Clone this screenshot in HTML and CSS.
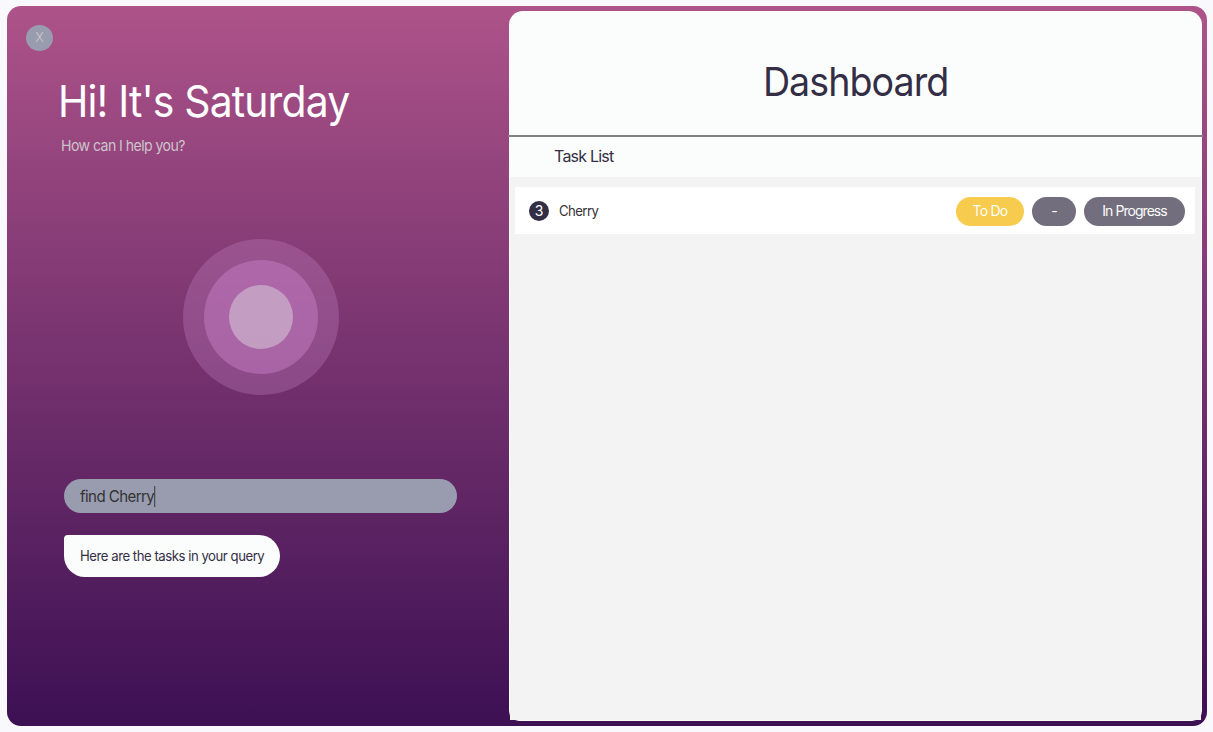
FILE: index.html
```html
<!DOCTYPE html>
<html lang="en">
<head>
<meta charset="utf-8">
<title>Dashboard</title>
<link rel="stylesheet" href="styles.css">
</head>
<body>
<div class="window">
  <section class="assistant">
    <button class="close">X</button>
    <h1 class="greeting">Hi! It's Saturday</h1>
    <p class="prompt">How can I help you?</p>
    <div class="orb"><div class="orb-mid"><div class="orb-core"></div></div></div>
    <div class="query"><span class="query-text">find Cherry<i class="caret"></i></span></div>
    <div class="reply"><span class="reply-text">Here are the tasks in your query</span></div>
  </section>
  <main class="panel">
    <header class="panel-head"><h2 class="panel-title">Dashboard</h2></header>
    <div class="list-head"><span class="list-title">Task List</span></div>
    <div class="list">
      <div class="task">
        <span class="index">3</span>
        <span class="name">Cherry</span>
        <span class="pill todo">To Do</span>
        <span class="pill dash">-</span>
        <span class="pill progress">In Progress</span>
      </div>
    </div>
  </main>
</div>
</body>
</html>
```
FILE: styles.css
```css
* { box-sizing: border-box; }
body {
  margin: 0;
  padding: 6px 6px 6px 7px;
  height: 732px;
  overflow: hidden;
  background: #f8f8fd;
  font-family: Inter, "Liberation Sans", sans-serif;
  color: #332e45;
}
.window {
  display: flex;
  height: 720px;
  padding: 5px 5px 5px 0;
  border-radius: 14px;
  background: linear-gradient(#ad5389, #3c1053);
}
.assistant { display: flex; flex-direction: column; align-items: flex-start; width: 502px; }
.close {
  width: 27px; height: 26px;
  margin: 14px 0 0 19px;
  padding: 0 0 2px;
  border: 0; border-radius: 50%;
  background: #999bae;
  color: #cbcbcb;
  font: 300 13px/24px Inter, sans-serif;
}
/* Slightly condensed lettering */
.greeting, .prompt, .query-text, .reply-text { transform: scaleX(.94); transform-origin: 0 50%; }
.greeting {
  margin: 24px 0 0 51px;
  font-size: 43.5px; line-height: 52px; font-weight: 400;
  letter-spacing: -0.9px;
  color: #fff;
  white-space: nowrap;
}
.prompt {
  margin: 9px 0 0 54px;
  font-size: 15px; line-height: 20px; font-weight: 400;
  letter-spacing: -0.6px;
  color: #cbc4cb;
}
.orb, .orb-mid, .orb-core { display: flex; align-items: center; justify-content: center; border-radius: 50%; }
.orb { width: 156px; height: 156px; margin: 83px 0 0 176px; background: rgba(192, 132, 192, .32); }
.orb-mid { width: 114px; height: 114px; background: rgba(207, 137, 207, .42); }
.orb-core { width: 64px; height: 64px; background: rgba(212, 194, 212, .6); }
.query {
  display: flex; align-items: center;
  width: 393px; height: 34px;
  margin: 84px 0 0 57px;
  padding-left: 16px;
  border-radius: 17px;
  background: #999bae;
  font-size: 16px; font-weight: 400;
  letter-spacing: -0.6px;
  color: #333;
}
.query-text { display: flex; align-items: center; }
.caret { width: 1px; height: 21px; background: #333; }
.reply {
  display: flex; align-items: center;
  width: 216px; height: 42px;
  margin: 22px 0 0 57px;
  padding: 0 0 1px 16px;
  border-radius: 4px 22px 22px 22px;
  background: #fbfdfc;
  font-size: 14px; white-space: nowrap;
  letter-spacing: -0.5px;
}
.panel {
  display: flex; flex-direction: column;
  width: 693px; height: 710px;
  border-radius: 14px 14px 10px 10px;
  background: #fbfdfc;
}
.panel-head {
  display: flex; align-items: center; justify-content: center;
  height: 124px;
  padding-top: 18px;
}
.panel-title {
  margin: 0;
  font-size: 40px; line-height: 48px; font-weight: 400;
  letter-spacing: -1px;
  transform: scaleX(.94);
}
.list-head {
  height: 42px;
  margin: 0 -1px;
  padding: 9px 0 0 46px;
  border-top: 2px solid #808080;
  font-size: 16px; line-height: 20px; letter-spacing: -0.78px;
}
.list { flex: 1; margin: 0 1px 1px; padding: 10px 6px 0 5px; background: #f3f3f3; }
.task {
  display: flex; align-items: center;
  height: 47px;
  padding: 1px 10px 0 14px;
  background: #fff;
  font-size: 14px; color: #333;
}
.index {
  width: 20px; height: 20px;
  border-radius: 50%;
  background: #332e45; color: #fff;
  line-height: 20px; text-align: center;
}
.name { flex: 1; margin: -1px 0 0 10px; letter-spacing: -0.6px; transform: scaleX(.94); transform-origin: 0 50%; }
.pill {
  height: 29px;
  border-radius: 15px;
  margin-left: 8px;
  background: #736e7d;
  color: #fbfdfc;
  line-height: 28px; text-align: center;
  letter-spacing: -0.95px;
}
.todo { width: 68px; background: #f7cb4d; letter-spacing: -0.8px; }
.dash { width: 44px; }
.progress { width: 101px; }
```
